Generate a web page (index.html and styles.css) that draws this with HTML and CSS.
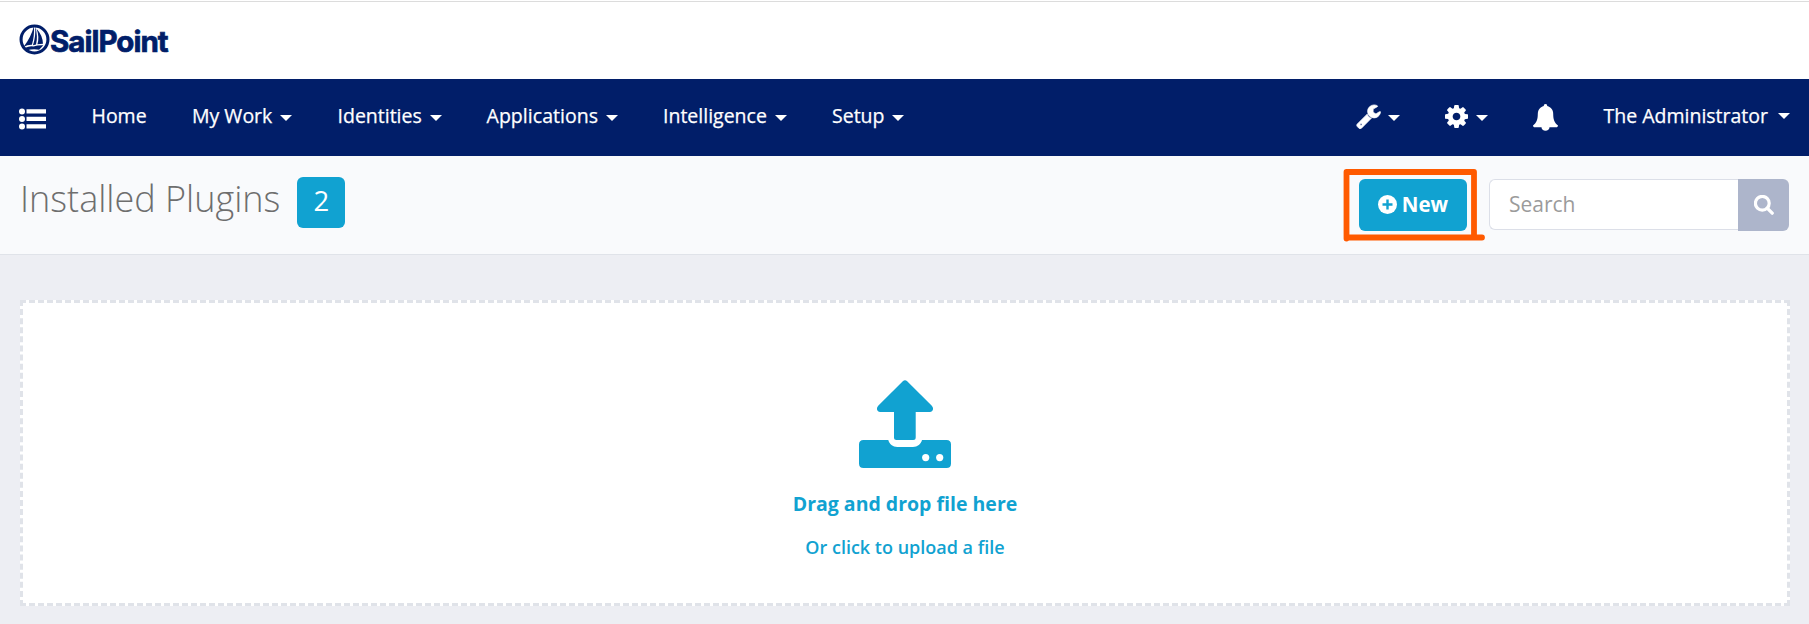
FILE: index.html
```html
<!DOCTYPE html>
<html lang="en">
<head>
<meta charset="utf-8">
<title>Installed Plugins</title>
<link rel="stylesheet" href="styles.css">
</head>
<body>
<header class="brand">
  <svg class="brand-mark" viewBox="0 0 30 30"><circle cx="15" cy="15" r="13" fill="none" stroke="#011e69" stroke-width="3"/><path fill="#011e69" d="M14.500 2C12.500 9 9.500 16 4.500 22q4-2 8-1.800Q15 12 14.500 2zM15.600 2Q16.500 12 13.500 20.500l3-.7Q18.500 12 15.600 2zM17 4.500q3 8 .8 15.200l5.400-.5Q23 11 17 4.500zM6 23q5-2.200 8-1.200 4-1.500 9.500-1.300L19.500 25Q14 23.500 8 25.500z"/></svg>
  <span class="brand-name">SailPoint</span>
</header>
<nav class="nav">
  <svg class="menu" viewBox="0 0 27 22"><g fill="#fff"><circle cx="3" cy="3.500" r="3"/><circle cx="3" cy="11" r="3"/><circle cx="3" cy="18.500" r="3"/><path d="M7.500 1.300H27v4.200H7.500zM7.500 8.800H27V13H7.500zM7.500 16.300H27v4.200H7.500z"/></g></svg>
  <a class="item home">Home</a>
  <a class="item work">My Work<i class="caret"></i></a>
  <a class="item identities">Identities<i class="caret"></i></a>
  <a class="item applications">Applications<i class="caret"></i></a>
  <a class="item intelligence">Intelligence<i class="caret"></i></a>
  <a class="item setup">Setup<i class="caret"></i></a>
  <div class="tools">
    <a class="tool wrench"><svg viewBox="64 64 1664 1728" width="25" height="25"><path fill="#fff" stroke="#fff" stroke-width="50" d="M448 1472q0-26-19-45t-45-19-45 19-19 45 19 45 45 19 45-19 19-45zm644-420l-682 682q-37 37-90 37-52 0-91-37l-106-108q-38-36-38-90 0-53 38-91l681-681q39 98 114.500 173.500t173.500 114.500zm634-435q0 39-23 106-47 134-164.500 217.500t-258.500 83.500q-185 0-316.500-131.500t-131.500-316.500 131.500-316.500 316.500-131.500q58 0 121.500 16.500t107.500 46.500q16 11 16 28t-16 28l-293 169v224l193 107q5-3 79-48.500t135.500-81 70.500-35.500q15 0 23.500 10t8.500 25z"/></svg><i class="caret"></i></a>
    <a class="tool gear"><svg viewBox="128 128 1536 1536" width="23" height="23"><path fill="#fff" d="M1152 896q0-106-75-181t-181-75-181 75-75 181 75 181 181 75 181-75 75-181zm512-109v222q0 12-8 23t-20 13l-185 28q-19 54-39 91 35 50 107 138 10 12 10 25t-9 23q-27 37-99 108t-94 71q-12 0-26-9l-138-108q-44 23-91 38-16 136-29 186-7 28-36 28h-222q-14 0-24.500-8.500t-11.500-21.500l-28-184q-49-16-90-37l-141 107q-10 9-25 9-14 0-25-11-126-114-165-168-7-10-7-23 0-12 8-23 15-21 51-66.500t54-70.500q-27-50-41-99l-183-27q-13-2-21-12.500t-8-23.500v-222q0-12 8-23t19-13l186-28q14-46 39-92-40-57-107-138-10-12-10-24 0-10 9-23 26-36 98.500-107.500t94.500-71.500q13 0 26 10l138 107q44-23 91-38 16-136 29-186 7-28 36-28h222q14 0 24.500 8.500t11.500 21.500l28 184q49 16 90 37l142-107q9-9 24-9 13 0 25 10 129 119 165 170 7 8 7 22 0 12-8 23-15 21-51 66.500t-54 70.500q26 50 41 98l183 28q13 2 21 12.500t8 23.500z"/></svg><i class="caret"></i></a>
    <svg class="bell" viewBox="0 0 25 27"><path fill="#fff" d="M12.500 0c1.200 0 1.800.8 1.700 2 4 1 6 4.200 6 8 0 6 1.500 9 4.800 11.500 0 1.200-.8 1.800-1.800 1.800H16.500c0 2-1.800 3.500-4 3.500s-4-1.500-4-3.500H1.800C.8 23.300 0 22.700 0 21.500 3.300 19 4.800 16 4.800 10c0-3.800 2-7 6-8-.1-1.200.5-2 1.700-2z"/></svg>
    <a class="item admin">The Administrator<i class="caret"></i></a>
  </div>
</nav>
<section class="titlebar">
  <h1 class="title">Installed Plugins</h1>
  <span class="count">2</span>
  <div class="actions">
    <div class="new-wrap">
      <button class="new"><svg viewBox="0 0 19 19" width="19" height="19"><circle cx="9.500" cy="9.500" r="9.500" fill="#fff"/><path d="M9.500 4.500v10M4.500 9.500h10" stroke="#11a2d1" stroke-width="2.400"/></svg>New</button>
      <svg class="highlight" viewBox="0 0 144 74"><path d="M3.500 70.500V4H131v64M3.500 69.500H139" fill="none" stroke="#ff5a00" stroke-width="5.800" stroke-linecap="round" stroke-linejoin="round"/></svg>
    </div>
    <div class="search">
      <input class="search-input" type="text" placeholder="Search">
      <button class="search-button"><svg viewBox="0 0 20 20" width="20" height="20"><circle cx="8.300" cy="8.300" r="6.900" fill="none" stroke="#fff" stroke-width="3.200"/><path d="M13.200 13.200 18.200 18.200" stroke="#fff" stroke-width="3.300" stroke-linecap="round"/></svg></button>
    </div>
  </div>
</section>
<main class="content">
  <div class="drop">
    <svg class="upload" viewBox="0 0 92 88"><path fill="#11a2d1" d="M43.800 1.200q2.200-2 4.400 0L72.800 25.800c2.500 2.500 1 6.200-2 6.200H56.700v25.500q0 2.500-2.500 2.500H37.500q-2.500 0-2.500-2.500V32H21.200c-3 0-4.500-3.700-2-6.200zM4.500 60h24.800c1 4 4.500 7 9 7H54c4.500 0 8-3 9-7h24.500q4.500 0 4.500 4.500v19q0 4.500-4.500 4.500h-83Q0 88 0 83.500v-19Q0 60 4.500 60z"/><circle cx="66.700" cy="77.600" r="3.600" fill="#fff"/><circle cx="80.700" cy="77.600" r="3.600" fill="#fff"/></svg>
    <p class="drop-title">Drag and drop file here</p>
    <p class="drop-sub">Or click to upload a file</p>
  </div>
</main>
</body>
</html>
```

FILE: styles.css
```css
* { box-sizing: border-box; }
body {
  margin: 0;
  height: 624px;
  overflow: hidden;
  display: flex;
  flex-direction: column;
  font-family: "Open Sans", "Noto Sans", sans-serif;
  background: #edeef3;
}
svg { display: block; flex: none; }
.brand {
  height: 79px;
  margin: 0;
  padding: 24px 0 0 19px;
  display: flex;
  background: linear-gradient(#fff 1px, #dcdcdc 1px, #dcdcdc 2px, #fff 2px);
}
.brand-mark { width: 31px; height: 31px; }
.brand-name {
  font: 700 29.5px/34px Inter, sans-serif;
  letter-spacing: -1px;
  color: #011e69;
  -webkit-text-stroke: 0.7px #011e69;
}
.nav {
  height: 77px;
  padding: 0 19px;
  display: flex;
  align-items: center;
  background: #011e69;
  color: #fff;
}
.menu { width: 27px; height: 22px; margin: 2px 45.5px 0 0; }
.item {
  display: flex;
  align-items: center;
  font-size: 19.5px;
  line-height: 28px;
  white-space: nowrap;
  padding-bottom: 3px;
  -webkit-text-stroke: 0.25px #fff;
}
.home { width: 100.5px; }
.work { width: 145.5px; }
.identities { width: 149px; }
.applications { width: 176.5px; letter-spacing: 0.05px; }
.intelligence { width: 169px; }
.caret {
  width: 0;
  height: 0;
  margin: 3px 0 0 8px;
  border: solid transparent;
  border-width: 6px 6px 0;
  border-top-color: #fff;
}
.tools { margin-left: auto; display: flex; align-items: center; }
.tool { display: flex; align-items: center; }
.tool .caret { margin-top: 1px; }
.wrench { margin-right: 45px; }
.wrench .caret { margin-left: 7px; }
.gear { margin-right: 45px; }
.bell { width: 25px; height: 27px; margin: -1px 45px 0 0; }
.admin .caret { margin-top: 0; margin-left: 10px; }
.wrench svg, .gear svg { margin-top: -2px; }
.titlebar {
  height: 99px;
  padding: 0 20px;
  display: flex;
  align-items: flex-start;
  background: #f9fafc;
  border-bottom: 1px solid #e0e3e9;
}
.title {
  margin: 18px 0 0;
  font-size: 36px;
  line-height: 49px;
  font-weight: 300;
  color: #6e6e6e;
  white-space: nowrap;
}
.count {
  width: 48px;
  height: 51px;
  margin: 21px 0 0 17px;
  border-radius: 6px;
  background: #11a2d1;
  color: #fff;
  font-size: 27.5px;
  line-height: 48px;
  text-align: center;
}
.actions { margin: 23px 0 0 auto; display: flex; }
.new-wrap { position: relative; margin-right: 22px; }
.new {
  width: 108px;
  height: 52px;
  padding: 0 0 2px;
  display: flex;
  align-items: center;
  justify-content: center;
  gap: 5px;
  border: 0;
  border-radius: 6px;
  background: #11a2d1;
  color: #fff;
  font: 700 20.5px "Open Sans", sans-serif;
}
.highlight {
  position: absolute;
  left: -16px;
  top: -11px;
  width: 144px;
  height: 74px;
}
.search { display: flex; }
.search-input {
  width: 249px;
  height: 51px;
  padding: 0 19px 1px;
  border: 1px solid #dcdfe8;
  border-right: 0;
  border-radius: 6px 0 0 6px;
  background: #fff;
  font: 21px "Open Sans", sans-serif;
}
.search-input::placeholder { color: #9b9b9b; }
.search-button {
  width: 51px;
  height: 52px;
  padding: 0;
  display: flex;
  align-items: center;
  justify-content: center;
  border: 0;
  border-radius: 0 6px 6px 0;
  background: #adb5cb;
}
.content { flex: 1; padding: 45px 19px 0 20px; }
.drop {
  height: 306px;
  padding-top: 77px;
  display: flex;
  flex-direction: column;
  align-items: center;
  border: 3px dashed #e0e3e9;
  background: #fff;
  color: #11a2d1;
}
.upload { width: 92px; height: 88px; }
.drop-title { margin: 22px 0 0; font-size: 19.5px; line-height: 28px; font-weight: 700; }
.drop-sub { margin: 16px 0 0; font-size: 18px; line-height: 26px; font-weight: 600; }
```
